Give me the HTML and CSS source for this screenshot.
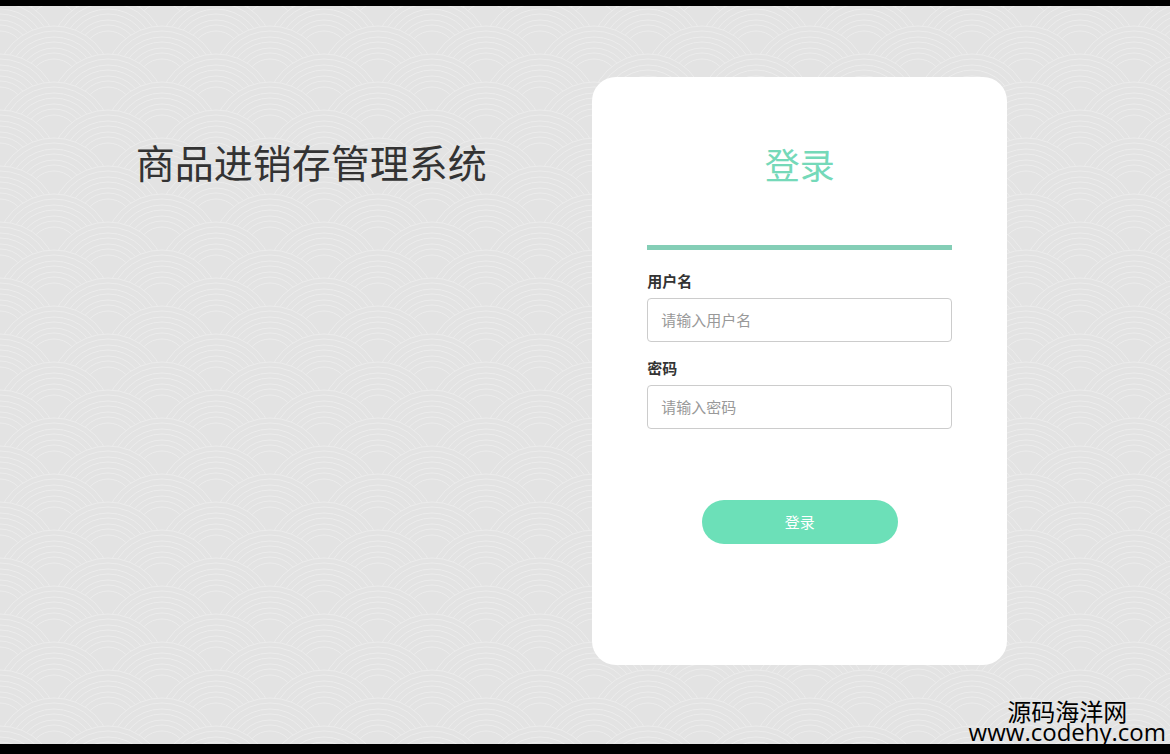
FILE: index.html
```html
<!DOCTYPE html>
<html lang="zh-CN">
<head>
    <meta charset="UTF-8">
    <meta name="viewport" content="width=device-width, initial-scale=1.0">
    <title>商品进销存管理系统</title>
    <link rel="stylesheet" href="styles.css">
</head>
<body>
    <main class="container">
        <h1 class="system-title">商品进销存管理系统</h1>

        <div class="login-panel">
            <h2 class="login-title">登录</h2>
            <form class="login-form">
                <div class="form-group">
                    <label for="username">用户名</label>
                    <input type="text" id="username" class="form-control" placeholder="请输入用户名">
                </div>
                <div class="form-group">
                    <label for="password">密码</label>
                    <input type="password" id="password" class="form-control" placeholder="请输入密码">
                </div>
                <button type="submit" class="btn-login">登录</button>
            </form>
        </div>
    </main>

    <div class="watermark">
        <div>源码海洋网</div>
        <div class="watermark-url">www.codehy.com</div>
    </div>
</body>
</html>
```
FILE: styles.css
```css
* {
    box-sizing: border-box;
}

body {
    font-family: "Noto Sans CJK SC", sans-serif;
    font-size: 15px;
    margin: 0;
    min-height: 100vh;
    color: #333;
    border-top: 6px solid #000;
    border-bottom: 10px solid #000;
    background-color: #e3e3e3;
    /* overlapping wave scales */
    background-image: url("data:image/svg+xml,%3csvg xmlns='http://www.w3.org/2000/svg' width='108' height='56'%3e%3cdefs%3e%3cg id='s' fill='%23e3e3e3' stroke='%23ececec'%3e%3ccircle r='58'/%3e%3ccircle r='53'/%3e%3ccircle r='47'/%3e%3ccircle r='42'/%3e%3ccircle r='36'/%3e%3ccircle r='31'/%3e%3ccircle r='25'/%3e%3c/g%3e%3c/defs%3e%3cuse href='%23s' x='54' y='28'/%3e%3cuse href='%23s' x='0' y='56'/%3e%3cuse href='%23s' x='108' y='56'/%3e%3cuse href='%23s' x='54' y='84'/%3e%3cuse href='%23s' x='0' y='112'/%3e%3cuse href='%23s' x='108' y='112'/%3e%3c/svg%3e");
}

.container {
    display: grid;
    grid-template-columns: 1fr 1fr;
    align-items: start;
    padding: 71px 126px 71px 67px;
}

.system-title {
    margin: 54px 0 0;
    font-size: 39px;
    font-weight: 400;
    line-height: 60px;
    text-align: center;
}

.login-panel {
    width: 85%;
    min-height: 588px;
    margin: 0 auto;
    padding: 57px 55px;
    background: #fff;
    border-radius: 24px;
}

.login-title {
    margin: 0;
    padding-bottom: 51px;
    border-bottom: 5px solid #84ceb6;
    color: #75d9b9;
    font-size: 35px;
    font-weight: 400;
    line-height: 60px;
    text-align: center;
}

.login-form {
    padding-top: 20px;
}

.form-group {
    margin-bottom: 15px;
}

.form-group label {
    display: block;
    margin-bottom: 6px;
    font-weight: bold;
    line-height: 22px;
}

.form-control {
    display: block;
    width: 100%;
    height: 44px;
    padding: 7px 13px 9px;
    border: 1px solid #ccc;
    border-radius: 4px;
    color: #555;
    font: inherit;
    outline: none;
}

.form-control::placeholder {
    color: #999;
}

.form-control:focus {
    border-color: #6ce0b8;
}

.btn-login {
    display: block;
    width: 196px;
    height: 44px;
    margin: 71px auto 0;
    padding: 0 0 2px;
    border: none;
    border-radius: 22px;
    background: #6ce0b8;
    color: #fff;
    font: inherit;
    cursor: pointer;
}

.btn-login:hover {
    background: #55cfa5;
}

.watermark {
    position: absolute;
    right: 4px;
    bottom: 12px;
    color: #000;
    font-size: 24px;
    line-height: 21px;
    text-align: center;
}

.watermark-url {
    font-family: "Open Sans", sans-serif;
}
```
